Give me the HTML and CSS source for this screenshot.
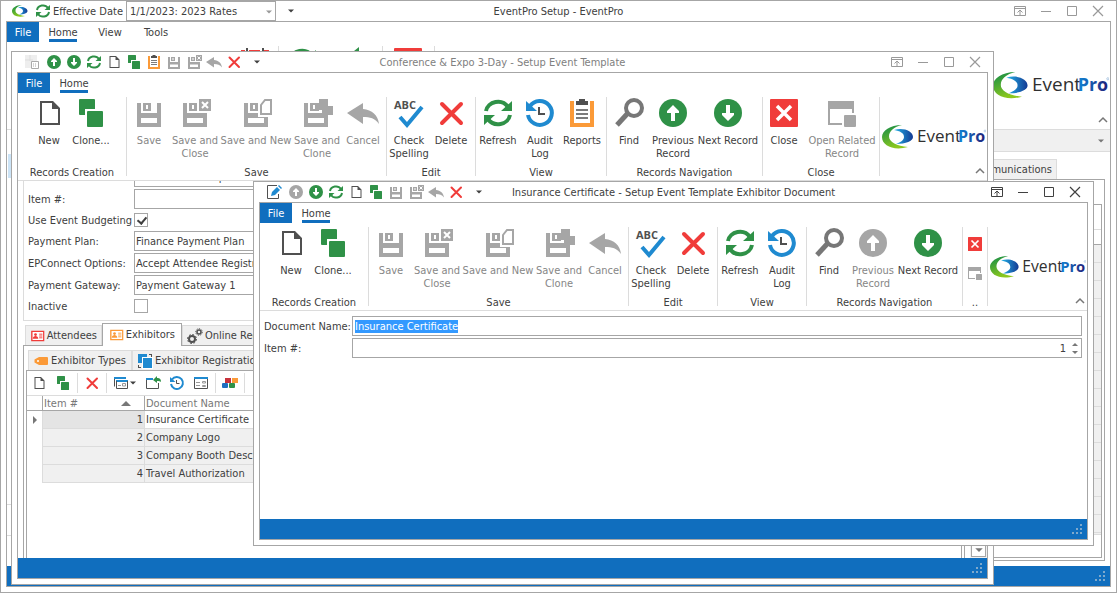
FILE: index.html
```html
<!DOCTYPE html>
<html lang="en">
<head>
  <meta charset="UTF-8" />
  <meta name="viewport" content="width=device-width, initial-scale=1.0" />
  <title>EventPro Setup</title>
  <link rel="stylesheet" href="styles.css">
</head>
<body>
  <!-- icon sprite -->
  <svg class="sprite" xmlns="http://www.w3.org/2000/svg">
    <defs>
      <linearGradient id="gGreen" x1="0" y1="0" x2="0.4" y2="1">
        <stop offset="0" stop-color="#0f8a4a" />
        <stop offset="1" stop-color="#8cc81e" />
      </linearGradient>
      <linearGradient id="gBlue" x1="0" y1="0" x2="1" y2="0">
        <stop offset="0" stop-color="#23b4e8" />
        <stop offset="1" stop-color="#143a94" />
      </linearGradient>
      <linearGradient id="gPro" x1="0" y1="0" x2="1" y2="0">
        <stop offset="0" stop-color="#1186d6" />
        <stop offset="1" stop-color="#1f1f78" />
      </linearGradient>
    </defs>
    <symbol id="i-new" viewBox="0 0 32 32">
      <path d="M7 4h13l7 7v17H7z M9 6v20h16V12h-6V6z" fill="#505050" fill-rule="evenodd" />
    </symbol>
    <symbol id="i-clone" viewBox="0 0 32 32">
      <rect x="4" y="2" width="16" height="16" rx="1" fill="#2f9147" />
      <rect x="10" y="12" width="20" height="20" fill="#fff" />
      <rect x="12" y="14" width="16" height="16" rx="1" fill="#2f9147" />
    </symbol>
    <symbol id="i-save" viewBox="0 0 32 32">
      <path d="M4 6h4v10h16V6h4v24H4z M8 21v5h16v-5z M10 6h8v8h-8z M13 8v4h2V8z" fill="#a6a6a6" fill-rule="evenodd" />
    </symbol>
    <symbol id="i-saveclose" viewBox="0 0 32 32">
      <path d="M4 6h4v10h20v14H4z M8 21v5h16v-5z M10 6h8v8h-8z M13 8v4h2V8z" fill="#a6a6a6" fill-rule="evenodd" />
      <path d="M18 0h14v16H18z" fill="#fff" />
      <path d="M20 2h12v12H20z" fill="#a6a6a6" />
      <path d="M23 5l6 6M29 5l-6 6" stroke="#fff" stroke-width="2" />
    </symbol>
    <symbol id="i-savenew" viewBox="0 0 32 32">
      <path d="M4 6h4v10h10v4h10v10H4z M8 21v5h16v-5z M10 6h8v8h-8z M13 8v4h2V8z" fill="#a6a6a6" fill-rule="evenodd" />
      <path d="M18 7l6-6h8v19H18z" fill="#fff" />
      <path d="M25 3h6v14H21V8z" fill="#fff" stroke="#a6a6a6" stroke-width="2" />
    </symbol>
    <symbol id="i-saveclone" viewBox="0 0 32 32">
      <path d="M3 6h4v10h20v14H3z M7 21v5h16v-5z M9 6h9v8H9z M12 8v4h2V8z" fill="#a6a6a6" fill-rule="evenodd" />
      <path d="M18 2h9v7h5v9H21v-5h-6v-2h3z" fill="#a6a6a6" />
    </symbol>
    <symbol id="i-cancel" viewBox="0 0 32 32">
      <path d="M0 16L16 6v6c9 1 15 6 16 15-4-6-9-7-16-7v7z" fill="#a6a6a6" />
    </symbol>
    <symbol id="i-spell" viewBox="0 0 32 32">
      <text x="1" y="12" class="abc">ABC</text>
      <path d="M7 20l7 8L29 10" fill="none" stroke="#1f8ad0" stroke-width="4" />
    </symbol>
    <symbol id="i-delete" viewBox="0 0 32 32">
      <path d="M7 7l19 19M26 7L7 26" stroke="#f03c3a" stroke-width="4" stroke-linecap="round" />
    </symbol>
    <symbol id="i-refresh" viewBox="0 0 32 32">
      <path d="M4 14a12 11 0 0 1 22-4M28 18a12 11 0 0 1-22 4" fill="none" stroke="#2f9147" stroke-width="4" />
      <path d="M30 4v10H19z M2 28V18h11z" fill="#2f9147" />
    </symbol>
    <symbol id="i-audit" viewBox="0 0 32 32">
      <path d="M6 9a12 12 0 1 1-2 9" fill="none" stroke="#1f8ad0" stroke-width="4" />
      <path d="M2 4v10h11z" fill="#1f8ad0" />
      <path d="M15 10v7h6" fill="none" stroke="#505050" stroke-width="2" />
    </symbol>
    <symbol id="i-reports" viewBox="0 0 32 32">
      <path d="M4 4h24v26H4z M8 8v18h16V8z" fill="#fb9a38" fill-rule="evenodd" />
      <path d="M8 3h16v5H8z" fill="#fff" />
      <path d="M10 4h3V2h6v2h3v4H10z" fill="#505050" />
      <path d="M10 13h12M10 17h12M10 21h12" stroke="#505050" stroke-width="1.5" />
    </symbol>
    <symbol id="i-find" viewBox="0 0 32 32">
      <circle cx="21" cy="11" r="8" fill="none" stroke="#777" stroke-width="4" />
      <path d="M15 16L4 28" stroke="#777" stroke-width="5" />
    </symbol>
    <symbol id="i-up" viewBox="0 0 32 32">
      <circle cx="16" cy="16" r="14" fill="currentColor" />
      <path d="M14 24v-8h-4v-2l6-6 6 6v2h-4v8z" fill="#fff" />
    </symbol>
    <symbol id="i-down" viewBox="0 0 32 32">
      <circle cx="16" cy="16" r="14" fill="currentColor" />
      <path d="M14 8v8h-4v2l6 6 6-6v-2h-4V8z" fill="#fff" />
    </symbol>
    <symbol id="i-back" viewBox="0 0 32 32">
      <path d="M4 13L19 1v7c6 1 11 7 12 15-4-5-7-6-12-6v7z" fill="#2f9147" />
    </symbol>
    <symbol id="i-close" viewBox="0 0 32 32">
      <rect x="2" y="2" width="28" height="28" rx="1" fill="#f03c3a" />
      <path d="M9 9l14 14M23 9L9 23" stroke="#fff" stroke-width="3.5" />
    </symbol>
    <symbol id="i-related" viewBox="0 0 32 32">
      <path d="M2 4h26v12h-2v-4H4v14h12v2H2z" fill="#a6a6a6" />
      <rect x="18" y="18" width="12" height="12" rx="1" fill="#a6a6a6" />
    </symbol>
    <symbol id="i-form" viewBox="0 0 16 16">
      <path d="M1 1h12v6h-5v7H1z" fill="#eee" />
      <path d="M6 1v6M1 6h8" stroke="#ddd" />
      <path d="M7.5 7.5h7v7h-7z" fill="#fff" stroke="#aaa" />
      <path d="M9 10h4M9 12h4" stroke="#aaa" stroke-dasharray="1 1" />
    </symbol>
    <symbol id="i-edit" viewBox="0 0 16 16">
      <path d="M12.500 10v4.500h-11v-13H11" fill="none" stroke="#505050" />
      <path d="M5 12l1-4 5-5 3 3-5 5z" fill="#1f8ad0" />
      <path d="M12 2l1-1 3 3-1 1z" fill="#1f8ad0" />
    </symbol>
    <symbol id="i-caret" viewBox="0 0 8 8">
      <path d="M1 2.500h6l-3 3z" fill="currentColor" />
    </symbol>
    <symbol id="i-chevron" viewBox="0 0 10 8">
      <path d="M1 6l4-4 4 4" fill="none" stroke="#777" stroke-width="1.500" />
    </symbol>
    <symbol id="i-pin" viewBox="0 0 12 12">
      <path d="M.5 1.500h11v9H.5z M.5 3.500h11 M6 10V5 M3.500 7.500L6 5l2.500 2.500" fill="none" stroke="currentColor" />
    </symbol>
    <symbol id="i-min" viewBox="0 0 12 12">
      <path d="M1 6.500h10" stroke="currentColor" />
    </symbol>
    <symbol id="i-max" viewBox="0 0 12 12">
      <path d="M1.500 1.500h9v9h-9z" fill="none" stroke="currentColor" />
    </symbol>
    <symbol id="i-x" viewBox="0 0 12 12">
      <path d="M1 1l10 10M11 1L1 11" stroke="currentColor" stroke-width="1.200" />
    </symbol>
    <symbol id="i-grip" viewBox="0 0 12 12">
      <path d="M8 0h2v2H8zM4 4h2v2H4zM8 4h2v2H8zM0 8h2v2H0zM4 8h2v2H4zM8 8h2v2H8z" fill="#7fa9cc" />
    </symbol>
    <symbol id="i-card" viewBox="0 0 16 16">
      <path d="M2 3h13v10H2z" fill="#fff" stroke="currentColor" stroke-width="1.500" />
      <circle cx="6" cy="6.500" r="1.500" fill="currentColor" />
      <path d="M3 11c0-4 6-4 6 0z" fill="currentColor" />
      <path d="M10 6h3.500M10 8h3.500M10 10h3.500" stroke="currentColor" />
    </symbol>
    <symbol id="i-gears" viewBox="0 0 16 16">
      <circle cx="5" cy="11" r="3" fill="none" stroke="#505050" stroke-width="2" />
      <circle cx="5" cy="11" r="4.500" fill="none" stroke="#505050" stroke-dasharray="1.800 1.700" />
      <circle cx="12" cy="4" r="2" fill="none" stroke="#505050" stroke-width="1.500" />
      <circle cx="12" cy="4" r="3.300" fill="none" stroke="#505050" stroke-dasharray="1.300 1.200" />
    </symbol>
    <symbol id="i-tag" viewBox="0 0 16 16">
      <path d="M6 4h8q1 0 1 1v6q0 1-1 1H6L1.500 9.500v-3z" fill="#fb9a38" />
      <circle cx="5" cy="8" r="1" fill="#fff" />
    </symbol>
    <symbol id="i-reg" viewBox="0 0 16 16">
      <rect x="1" y="1" width="9" height="9" fill="#1f8ad0" />
      <path d="M5 4h11v12H5z" fill="#fff" />
      <rect x="6" y="5" width="9" height="10" fill="#1f8ad0" />
      <path d="M12 1.500h3M14.500 1v3M1 14.500h3M1.500 12v3" stroke="#505050" fill="none" />
    </symbol>
    <symbol id="i-views" viewBox="0 0 16 16">
      <path d="M1.500 11.500v-9h11" fill="none" stroke="#505050" />
      <path d="M1 2h12v2H1z M3 5h12v2H3z" fill="#1f8ad0" />
      <path d="M3.500 6v7.500h11V6" fill="none" stroke="#505050" />
      <path d="M5 10.500h3M9.500 8.500h3v2.500h-3z" fill="none" stroke="#999" />
    </symbol>
    <symbol id="i-export" viewBox="0 0 16 16">
      <path d="M8 3.500H1.500v10h12V8" fill="none" stroke="#505050" />
      <path d="M1 3h7v2H1z" fill="#1f8ad0" />
      <path d="M8 5l4-4v2c3 0 4 1 4 4-1-1-2-1-4-1v2z" fill="#2f9147" />
    </symbol>
    <symbol id="i-layout" viewBox="0 0 16 16">
      <path d="M1.500 2.500h13v11h-13z" fill="#fff" stroke="#505050" />
      <path d="M1 2h14v2H1z" fill="#1f8ad0" />
      <path d="M3 7.500h4M3 10.500h4M9.500 6.500h3v1.500h-3zM9.500 10.500h3v1h-3z" fill="none" stroke="#999" />
    </symbol>
    <symbol id="i-blocks" viewBox="0 0 16 16">
      <rect x="3" y="3" width="6" height="5" fill="#c8323c" />
      <rect x="10" y="3" width="6" height="5" fill="#fb9a38" />
      <rect x="0" y="8" width="6" height="5" rx="1" fill="#1f6fc0" />
      <rect x="7" y="8" width="6" height="5" rx="1" fill="#2f9147" />
    </symbol>
    <symbol id="i-calendar" viewBox="0 0 32 32">
      <path d="M2 4h4v4h4V4h11v4h4V4h5v26H2z" fill="#f03c3a" />
      <path d="M7 2h2v5H7zM23 2h2v5h-2z" fill="#505050" />
    </symbol>
    <symbol id="i-mark" viewBox="0 0 32 24">
      <path d="M20 0C8 0 0 6 0 12c0 9 12 14 26 10C15 21 7 17 7 11.500 7 6 12 2 20 0z" fill="url(#gGreen)" />
      <path d="M12 5c9-3 19 1 19 7 0 4-7 7-17 7 5-2 8-4 8-7 0-4-4-6-10-7z" fill="url(#gBlue)" />
    </symbol>
    <symbol id="logo" viewBox="0 0 104 26">
      <use href="#i-mark" x="0" y="1" width="32" height="24" />
      <text x="35" y="18" class="logo-event">Event</text>
      <text x="76" y="18" class="logo-pro">Pro</text>
      <circle cx="103" cy="7" r="1" fill="none" stroke="#7aa5d0" stroke-width="0.500" />
    </symbol>
  </svg>

  <!-- main window -->
  <div class="window main-window">
    <div class="titlebar">
      <div class="quick">
        <button class="qbtn" aria-label="EventPro"><svg><use href="#i-mark" /></svg></button>
        <button class="qbtn spaced" aria-label="Refresh"><svg><use href="#i-refresh" /></svg></button>
        <label for="effective">Effective Date</label>
        <div class="combo">
          <select id="effective">
            <option>1/1/2023: 2023 Rates</option>
          </select>
          <svg class="caret"><use href="#i-caret" /></svg>
        </div>
        <button class="qbtn more" aria-label="Customize"><svg class="caret"><use href="#i-caret" /></svg></button>
      </div>
      <div class="title">EventPro Setup - EventPro</div>
      <div class="controls">
        <button aria-label="Ribbon options"><svg><use href="#i-pin" /></svg></button>
        <button aria-label="Minimize"><svg><use href="#i-min" /></svg></button>
        <button aria-label="Maximize"><svg><use href="#i-max" /></svg></button>
        <button aria-label="Close"><svg><use href="#i-x" /></svg></button>
      </div>
    </div>
    <div class="frame">
      <div class="ribbon">
        <div class="tabs">
          <button class="file">File</button>
          <button class="tab active"><span>Home</span></button>
          <button class="tab"><span>View</span></button>
          <button class="tab"><span>Tools</span></button>
        </div>
        <div class="groups">
          <div class="group setup">
            <button class="rbtn" aria-label="Calendar"><svg><use href="#i-calendar" /></svg></button>
          </div>
          <div class="group actions">
            <button class="rbtn" aria-label="Refresh"><svg><use href="#i-refresh" /></svg></button>
            <button class="rbtn" aria-label="Undo"><svg><use href="#i-back" /></svg></button>
          </div>
          <div class="group quit">
            <button class="rbtn" aria-label="Close"><svg><use href="#i-close" /></svg></button>
          </div>
          <svg class="logo logo-large"><use href="#logo" /></svg>
        </div>
        <button class="collapse" aria-label="Collapse ribbon"><svg><use href="#i-chevron" /></svg></button>
      </div>
      <div class="workspace">
        <div class="sidebar">
          <div class="side-active"></div>
          <div class="side-item"></div>
          <div class="side-item"></div>
        </div>
        <div class="content">
          <div class="strip"><svg class="caret"><use href="#i-caret" /></svg></div>
          <div class="back-tabs"><button>Communications</button></div>
          <div class="back-panel">
            <div class="back-list">
              <div class="back-filter"></div>
              <div class="back-head"></div>
              <div class="back-rows"></div>
            </div>
          </div>
        </div>
      </div>
      <div class="statusbar"><svg><use href="#i-grip" /></svg></div>
    </div>
  </div>

  <!-- event template window -->
  <div class="window template-window">
    <div class="titlebar">
      <div class="quick">
        <button class="qbtn first" aria-label="Form"><svg><use href="#i-form" /></svg></button>
        <button class="qbtn green" aria-label="Previous"><svg><use href="#i-up" /></svg></button>
        <button class="qbtn green" aria-label="Next"><svg><use href="#i-down" /></svg></button>
        <button class="qbtn" aria-label="Refresh"><svg><use href="#i-refresh" /></svg></button>
        <button class="qbtn" aria-label="New"><svg><use href="#i-new" /></svg></button>
        <button class="qbtn" aria-label="Clone"><svg><use href="#i-clone" /></svg></button>
        <button class="qbtn" aria-label="Reports"><svg><use href="#i-reports" /></svg></button>
        <button class="qbtn" aria-label="Save"><svg><use href="#i-save" /></svg></button>
        <button class="qbtn" aria-label="Save and Close"><svg><use href="#i-saveclose" /></svg></button>
        <button class="qbtn" aria-label="Cancel"><svg><use href="#i-cancel" /></svg></button>
        <button class="qbtn" aria-label="Delete"><svg><use href="#i-delete" /></svg></button>
        <button class="qbtn spaced" aria-label="Customize"><svg class="caret"><use href="#i-caret" /></svg></button>
      </div>
      <div class="title muted">Conference &amp; Expo 3-Day - Setup Event Template</div>
      <div class="controls">
        <button aria-label="Ribbon options"><svg><use href="#i-pin" /></svg></button>
        <button aria-label="Minimize"><svg><use href="#i-min" /></svg></button>
        <button aria-label="Maximize"><svg><use href="#i-max" /></svg></button>
        <button aria-label="Close"><svg><use href="#i-x" /></svg></button>
      </div>
    </div>
    <div class="frame">
      <div class="ribbon">
        <div class="tabs">
          <button class="file">File</button>
          <button class="tab active"><span>Home</span></button>
        </div>
        <div class="groups">
          <div class="group creation">
            <button class="rbtn"><svg><use href="#i-new" /></svg>New</button>
            <button class="rbtn"><svg><use href="#i-clone" /></svg>Clone...</button>
            <div class="group-name">Records Creation</div>
          </div>
          <div class="group saving">
            <button class="rbtn save" disabled><svg><use href="#i-save" /></svg>Save</button>
            <button class="rbtn mid" disabled><svg><use href="#i-saveclose" /></svg>Save and<br>Close</button>
            <button class="rbtn wide" disabled><svg><use href="#i-savenew" /></svg>Save and New</button>
            <button class="rbtn mid" disabled><svg><use href="#i-saveclone" /></svg>Save and<br>Clone</button>
            <button class="rbtn save" disabled><svg><use href="#i-cancel" /></svg>Cancel</button>
            <div class="group-name">Save</div>
          </div>
          <div class="group editing">
            <button class="rbtn"><svg><use href="#i-spell" /></svg>Check<br>Spelling</button>
            <button class="rbtn"><svg><use href="#i-delete" /></svg>Delete</button>
            <div class="group-name">Edit</div>
          </div>
          <div class="group viewing-wide">
            <button class="rbtn"><svg><use href="#i-refresh" /></svg>Refresh</button>
            <button class="rbtn"><svg><use href="#i-audit" /></svg>Audit<br>Log</button>
            <button class="rbtn"><svg><use href="#i-reports" /></svg>Reports</button>
            <div class="group-name">View</div>
          </div>
          <div class="group navigation">
            <button class="rbtn"><svg><use href="#i-find" /></svg>Find</button>
            <button class="rbtn prev"><svg class="green"><use href="#i-up" /></svg>Previous<br>Record</button>
            <button class="rbtn next"><svg class="green"><use href="#i-down" /></svg>Next Record</button>
            <div class="group-name">Records Navigation</div>
          </div>
          <div class="group closing">
            <button class="rbtn"><svg><use href="#i-close" /></svg>Close</button>
            <button class="rbtn wide" disabled><svg><use href="#i-related" /></svg>Open Related<br>Record</button>
            <div class="group-name">Close</div>
          </div>
          <svg class="logo"><use href="#logo" /></svg>
        </div>
        <button class="collapse" aria-label="Collapse ribbon"><svg><use href="#i-chevron" /></svg></button>
      </div>
      <div class="workspace">
        <div class="record">
          <div class="template-form">
            <div class="row">
              <label for="tname">Name:</label>
              <input type="text" id="tname" value="Conference &amp; Expo 3-Day" />
            </div>
            <div class="row">
              <label for="titem">Item #:</label>
              <input type="text" id="titem" />
            </div>
            <div class="row check">
              <label for="budget">Use Event Budgeting</label>
              <input type="checkbox" id="budget" checked />
            </div>
            <div class="row">
              <label for="plan">Payment Plan:</label>
              <input type="text" id="plan" value="Finance Payment Plan" />
            </div>
            <div class="row">
              <label for="epc">EPConnect Options:</label>
              <input type="text" id="epc" value="Accept Attendee Registrations" />
            </div>
            <div class="row">
              <label for="gateway">Payment Gateway:</label>
              <input type="text" id="gateway" value="Payment Gateway 1" />
            </div>
            <div class="row check">
              <label for="inactive">Inactive</label>
              <input type="checkbox" id="inactive" />
            </div>
          </div>
          <div class="page-tabs">
            <button class="attendees"><svg class="red"><use href="#i-card" /></svg>Attendees</button>
            <button class="current"><svg class="orange"><use href="#i-card" /></svg>Exhibitors</button>
            <button><svg><use href="#i-gears" /></svg>Online Registration</button>
          </div>
          <div class="page">
            <div class="sub-tabs">
              <button><svg><use href="#i-tag" /></svg>Exhibitor Types</button>
              <button><svg><use href="#i-reg" /></svg>Exhibitor Registration</button>
            </div>
            <div class="grid-panel">
              <div class="toolbar">
                <button aria-label="New"><svg><use href="#i-new" /></svg></button>
                <button aria-label="Clone"><svg><use href="#i-clone" /></svg></button>
                <i></i>
                <button aria-label="Delete"><svg><use href="#i-delete" /></svg></button>
                <i></i>
                <button class="drop" aria-label="Views"><svg><use href="#i-views" /></svg><svg class="caret"><use href="#i-caret" /></svg></button>
                <button aria-label="Export"><svg><use href="#i-export" /></svg></button>
                <button aria-label="Audit log"><svg><use href="#i-audit" /></svg></button>
                <button aria-label="Layout"><svg><use href="#i-layout" /></svg></button>
                <i></i>
                <button aria-label="Categories"><svg><use href="#i-blocks" /></svg></button>
                <i></i>
              </div>
              <table>
                <thead>
                  <tr><th class="mark"></th><th class="num">Item #<span class="sort"></span></th><th>Document Name</th></tr>
                </thead>
                <tbody>
                  <tr class="selected"><td class="mark"><span class="pointer"></span></td><td class="num">1</td><td>Insurance Certificate</td></tr>
                  <tr><td class="mark"></td><td class="num">2</td><td>Company Logo</td></tr>
                  <tr><td class="mark"></td><td class="num">3</td><td>Company Booth Description</td></tr>
                  <tr><td class="mark"></td><td class="num">4</td><td>Travel Authorization</td></tr>
                </tbody>
              </table>
            </div>
          </div>
        </div>
        <div class="scroller"><button aria-label="Scroll down"><svg class="caret"><use href="#i-caret" /></svg></button></div>
      </div>
      <div class="statusbar"><svg><use href="#i-grip" /></svg></div>
    </div>
  </div>

  <!-- exhibitor document window -->
  <div class="window document-window">
    <div class="titlebar">
      <div class="quick">
        <button class="qbtn first" aria-label="Edit"><svg><use href="#i-edit" /></svg></button>
        <button class="qbtn gray" aria-label="Previous"><svg><use href="#i-up" /></svg></button>
        <button class="qbtn green" aria-label="Next"><svg><use href="#i-down" /></svg></button>
        <button class="qbtn" aria-label="Refresh"><svg><use href="#i-refresh" /></svg></button>
        <button class="qbtn" aria-label="New"><svg><use href="#i-new" /></svg></button>
        <button class="qbtn" aria-label="Clone"><svg><use href="#i-clone" /></svg></button>
        <button class="qbtn" aria-label="Save"><svg><use href="#i-save" /></svg></button>
        <button class="qbtn" aria-label="Save and Close"><svg><use href="#i-saveclose" /></svg></button>
        <button class="qbtn" aria-label="Cancel"><svg><use href="#i-cancel" /></svg></button>
        <button class="qbtn" aria-label="Delete"><svg><use href="#i-delete" /></svg></button>
        <button class="qbtn spaced" aria-label="Customize"><svg class="caret"><use href="#i-caret" /></svg></button>
      </div>
      <div class="title">Insurance Certificate - Setup Event Template Exhibitor Document</div>
      <div class="controls">
        <button aria-label="Ribbon options"><svg><use href="#i-pin" /></svg></button>
        <button aria-label="Minimize"><svg><use href="#i-min" /></svg></button>
        <button aria-label="Maximize"><svg><use href="#i-max" /></svg></button>
        <button aria-label="Close"><svg><use href="#i-x" /></svg></button>
      </div>
    </div>
    <div class="frame">
      <div class="ribbon">
        <div class="tabs">
          <button class="file">File</button>
          <button class="tab active"><span>Home</span></button>
        </div>
        <div class="groups">
          <div class="group creation">
            <button class="rbtn"><svg><use href="#i-new" /></svg>New</button>
            <button class="rbtn"><svg><use href="#i-clone" /></svg>Clone...</button>
            <div class="group-name">Records Creation</div>
          </div>
          <div class="group saving">
            <button class="rbtn save" disabled><svg><use href="#i-save" /></svg>Save</button>
            <button class="rbtn mid" disabled><svg><use href="#i-saveclose" /></svg>Save and<br>Close</button>
            <button class="rbtn wide" disabled><svg><use href="#i-savenew" /></svg>Save and New</button>
            <button class="rbtn mid" disabled><svg><use href="#i-saveclone" /></svg>Save and<br>Clone</button>
            <button class="rbtn save" disabled><svg><use href="#i-cancel" /></svg>Cancel</button>
            <div class="group-name">Save</div>
          </div>
          <div class="group editing">
            <button class="rbtn"><svg><use href="#i-spell" /></svg>Check<br>Spelling</button>
            <button class="rbtn"><svg><use href="#i-delete" /></svg>Delete</button>
            <div class="group-name">Edit</div>
          </div>
          <div class="group editing">
            <button class="rbtn"><svg><use href="#i-refresh" /></svg>Refresh</button>
            <button class="rbtn"><svg><use href="#i-audit" /></svg>Audit<br>Log</button>
            <div class="group-name">View</div>
          </div>
          <div class="group navigation">
            <button class="rbtn"><svg><use href="#i-find" /></svg>Find</button>
            <button class="rbtn prev" disabled><svg class="gray"><use href="#i-up" /></svg>Previous<br>Record</button>
            <button class="rbtn next"><svg class="green"><use href="#i-down" /></svg>Next Record</button>
            <div class="group-name">Records Navigation</div>
          </div>
          <div class="group compact">
            <button aria-label="Close"><svg><use href="#i-close" /></svg></button>
            <button aria-label="Open Related Record" disabled><svg><use href="#i-related" /></svg></button>
            <div class="group-name">..</div>
          </div>
          <svg class="logo logo-small"><use href="#logo" /></svg>
        </div>
        <button class="collapse" aria-label="Collapse ribbon"><svg><use href="#i-chevron" /></svg></button>
      </div>
      <div class="workspace">
        <form class="document-form">
          <label for="docname">Document Name:</label>
          <input type="text" id="docname" value="Insurance Certificate" />
          <label for="docitem">Item #:</label>
          <div class="spin">
            <input type="number" id="docitem" value="1" />
            <div class="spin-arrows"><span class="up"></span><span class="down"></span></div>
          </div>
        </form>
      </div>
      <div class="statusbar"><svg><use href="#i-grip" /></svg></div>
    </div>
  </div>

  <script>
    const docName = document.getElementById("docname");
    docName.focus();
    docName.select();
  </script>
</body>
</html>
```
FILE: styles.css
```css
* {
  box-sizing: border-box;
}

body {
  margin: 0;
  height: 100vh;
  position: relative;
  overflow: hidden;
  background-color: white;
  color: #404040;
  font: 11px/13px "DejaVu Sans Condensed", Tahoma, sans-serif;
}

button, input, select {
  font: inherit;
  color: inherit;
  border: none;
  background: none;
  padding: 0;
  margin: 0;
  outline: none;
}

button:disabled {
  color: #868686;
}

.sprite {
  position: absolute;
  width: 0;
  height: 0;
}

.abc {
  font: bold 11px "Open Sans", sans-serif;
  fill: #505050;
}

.logo-event {
  font: 17px "Open Sans", sans-serif;
  fill: #303030;
}

.logo-pro {
  font: bold 16px "Open Sans", sans-serif;
  fill: url(#gPro);
}

.green { color: #2f9147; }
.gray { color: #a6a6a6; }
.red { color: #f03c3a; }
.orange { color: #fb9a38; }

/* windows */
.window {
  position: absolute;
  display: flex;
  flex-direction: column;
  background-color: white;
  border: 1px solid #a6a6a6;
  padding: 0 5px 5px;
}

.main-window {
  inset: 0;
}

.template-window {
  inset: 51px 123px 8px 11px;
}

.document-window {
  inset: 181px 23px 47px 253px;
}

.titlebar {
  height: 20px;
  display: grid;
  grid-template-columns: 1fr auto 1fr;
  align-items: center;
}

.title {
  white-space: nowrap;
}

.title.muted {
  color: #808080;
}

.quick {
  display: flex;
  align-items: center;
  padding-left: 5px;
}

.main-window .quick {
  padding-left: 4px;
}

.qbtn {
  width: 20px;
  height: 20px;
  display: flex;
  align-items: center;
  justify-content: center;
}

.qbtn svg {
  width: 16px;
  height: 16px;
}

.first {
  margin-right: 2px;
}

.spaced {
  margin-left: 3px;
}

.more {
  margin-left: 5px;
}

svg.caret {
  width: 8px;
  height: 8px;
}

.combo {
  width: 150px;
  height: 20px;
  margin-left: 3px;
  position: relative;
}

.combo select {
  width: 100%;
  height: 100%;
  appearance: none;
  border: 1px solid #a6a6a6;
  padding-left: 3px;
}

.combo .caret {
  position: absolute;
  right: 3px;
  top: 7px;
  color: #999;
}

.controls {
  display: flex;
  justify-content: flex-end;
  color: #999;
}

.document-window .controls {
  color: #404040;
}

.controls button {
  width: 26px;
  height: 20px;
  display: flex;
  align-items: center;
  justify-content: center;
}

.controls svg {
  width: 12px;
  height: 12px;
}

.frame {
  flex: 1;
  min-height: 0;
  display: flex;
  flex-direction: column;
  border: 1px solid #a6a6a6;
}

.statusbar {
  height: 20px;
  flex-shrink: 0;
  background-color: #106ebe;
  display: flex;
  justify-content: flex-end;
  align-items: center;
  padding: 2px 3px 0 0;
}

.statusbar svg {
  width: 12px;
  height: 12px;
}

/* ribbon */
.ribbon {
  position: relative;
  height: 108px;
  flex-shrink: 0;
  border-bottom: 1px solid #dcdcdc;
}

.tabs {
  display: flex;
  height: 24px;
}

.file {
  width: 32px;
  height: 20px;
  background-color: #106ebe;
  color: white;
}

.tab {
  width: 46px;
  height: 20px;
}

.tab span {
  display: flex;
  justify-content: center;
  width: 28px;
  height: 20px;
  margin: 0 auto;
  padding-top: 4px;
  border-bottom: 3px solid transparent;
}

.tab.active {
  width: 48px;
}

.tab.active span {
  border-bottom-color: #106ebe;
}

.groups {
  display: flex;
  height: 79px;
}

.group {
  position: relative;
  display: flex;
  flex-shrink: 0;
  border-right: 1px solid #dcdcdc;
}

.creation { width: 109px; padding-left: 10px; }
.saving { width: 260px; }
.editing { width: 89px; padding-left: 1px; }
.viewing-wide { width: 131px; padding-left: 1px; }
.navigation { width: 156px; padding-left: 1px; }
.closing { width: 117px; }
.setup { width: 272px; padding-right: 2px; justify-content: flex-end; }
.actions { width: 104px; justify-content: space-between; padding: 0 5px 0 2px; }
.quit { width: 52px; padding-left: 4px; }

.compact {
  width: 25px;
  flex-direction: column;
  align-items: center;
  gap: 14px;
  padding-top: 9px;
}

.compact button {
  height: 15px;
}

.compact svg {
  width: 16px;
  height: 16px;
}

.group-name {
  position: absolute;
  left: 0;
  right: 0;
  bottom: -4px;
  text-align: center;
  line-height: 14px;
}

.rbtn {
  width: 42px;
  height: 64px;
  display: flex;
  flex-direction: column;
  align-items: center;
  flex-shrink: 0;
  text-align: center;
  white-space: nowrap;
}

.rbtn svg {
  flex-shrink: 0;
  width: 32px;
  height: 32px;
  margin-bottom: 5px;
}

.rbtn.save { width: 44px; }
.rbtn.mid { width: 48px; }
.rbtn.wide { width: 74px; }
.rbtn.prev { width: 46px; }
.rbtn.next { width: 64px; }

.logo {
  width: 104px;
  height: 26px;
  align-self: center;
  margin-left: 2px;
  flex-shrink: 0;
}

.logo-small {
  width: 96px;
  height: 24px;
}

.logo-large {
  width: 116px;
  height: 29px;
  margin-left: auto;
  margin-right: 1px;
}

.collapse {
  position: absolute;
  right: 2px;
  bottom: 5px;
  width: 10px;
  height: 8px;
}

.collapse svg {
  display: block;
  width: 10px;
  height: 8px;
}

.workspace {
  flex: 1;
  min-height: 0;
  display: flex;
  overflow: hidden;
}

/* main window content */
.sidebar {
  width: 228px;
  display: flex;
  flex-direction: column;
  padding-top: 24px;
}

.side-active {
  height: 24px;
  margin: 0 1px auto;
  background-color: #cce4f7;
}

.side-item {
  height: 31px;
  border-top: 1px solid #dcdcdc;
}

.content {
  flex: 1;
  display: flex;
  flex-direction: column;
  padding-bottom: 5px;
}

.strip {
  height: 22px;
  background-color: #f0f0f0;
  border-bottom: 1px solid #dcdcdc;
  display: flex;
  justify-content: flex-end;
  align-items: center;
  padding-right: 5px;
  color: #777;
}

.back-tabs {
  display: flex;
  justify-content: flex-end;
  padding: 7px 53px 0 0;
}

.back-tabs button {
  height: 20px;
  padding: 0 4px;
  background-color: #f0f0f0;
  border: 1px solid #dcdcdc;
  border-bottom: none;
}

.back-panel {
  flex: 1;
  margin-right: 5px;
  border: 1px solid #a6a6a6;
  padding: 24px 2px 2px;
  display: flex;
}

.back-list {
  flex: 1;
  border: 1px solid #a6a6a6;
}

.back-filter {
  height: 25px;
  border-bottom: 1px solid #dcdcdc;
}

.back-head {
  height: 15px;
  border-bottom: 1px solid #a6a6a6;
}

.back-rows {
  height: 290px;
  border-bottom: 1px solid #dcdcdc;
  background: repeating-linear-gradient(#f0f0f0 0 17px, #dcdcdc 17px 18px);
}

/* template window content */
.record {
  flex: 1;
  display: flex;
  flex-direction: column;
  padding-left: 5px;
}

.template-form {
  margin-top: -16px;
  border: 1px solid #dcdcdc;
  padding: 1px 4px 5px;
  flex-shrink: 0;
}

.row {
  display: flex;
  align-items: center;
  height: 20px;
  margin-bottom: 2px;
}

.row.check {
  height: 18px;
}

.row:last-child {
  margin-bottom: 0;
}

.row label {
  width: 106px;
  white-space: nowrap;
}

.row input[type="text"] {
  flex: 1;
  height: 20px;
  border: 1px solid #a6a6a6;
  padding: 0 1px;
}

.row input[type="checkbox"] {
  appearance: none;
  width: 14px;
  height: 14px;
  border: 1px solid #a6a6a6;
}

.row input[type="checkbox"]:checked::after {
  content: "";
  display: block;
  width: 4px;
  height: 7px;
  margin: 1px 4px;
  border: solid #404040;
  border-width: 0 2px 2px 0;
  transform: rotate(40deg);
}

.page-tabs {
  display: flex;
  align-items: flex-end;
  height: 23px;
  margin: 2px 0 -1px 2px;
  position: relative;
  flex-shrink: 0;
}

.page-tabs button, .sub-tabs button {
  display: flex;
  align-items: center;
  gap: 2px;
  height: 20px;
  padding: 0 4px;
  white-space: nowrap;
  background-color: #f0f0f0;
  border: 1px solid #dcdcdc;
  border-bottom: none;
}

.page-tabs svg, .sub-tabs svg {
  width: 16px;
  height: 16px;
}

.page-tabs button {
  margin-bottom: 1px;
}

.page-tabs .attendees {
  width: 77px;
}

.page-tabs .current {
  width: 80px;
  height: 23px;
  margin-bottom: 0;
  padding: 0 6px 1px;
  background-color: white;
  border-color: #a6a6a6;
}

.page {
  flex: 1;
  display: flex;
  flex-direction: column;
  margin-right: 5px;
  padding: 4px 2px 0;
  border: 1px solid #a6a6a6;
  border-bottom: none;
}

.sub-tabs {
  display: flex;
  padding-left: 2px;
}

.sub-tabs button:first-child {
  width: 104px;
}

.grid-panel {
  flex: 1;
  border: 1px solid #a6a6a6;
  border-bottom: none;
}

.toolbar {
  display: flex;
  align-items: center;
  height: 24px;
}

.toolbar button {
  width: 24px;
  height: 20px;
  display: flex;
  align-items: center;
  justify-content: center;
}

.toolbar button.drop {
  width: 32px;
}

.toolbar button svg {
  width: 16px;
  height: 16px;
  flex-shrink: 0;
}

.toolbar button svg.caret {
  width: 8px;
  height: 8px;
}

.toolbar i {
  width: 1px;
  height: 20px;
  margin: 0 2px;
  background-color: #dcdcdc;
}

table {
  width: 100%;
  table-layout: fixed;
  border-collapse: separate;
  border-spacing: 0;
  border-top: 1px solid #dcdcdc;
}

th {
  height: 15px;
  padding: 0 1px;
  text-align: left;
  font-weight: normal;
  color: #777;
  border-right: 1px solid #a6a6a6;
  border-bottom: 1px solid #a6a6a6;
}

td {
  height: 18px;
  padding: 0 1px;
  background-color: #f0f0f0;
  border-right: 1px solid #dcdcdc;
  border-bottom: 1px solid #dcdcdc;
}

.mark {
  width: 16px;
}

td.mark {
  background-color: white;
  border-bottom: none;
}

.num {
  width: 102px;
}

td.num {
  text-align: right;
}

.selected td {
  background-color: white;
}

.selected td.num {
  background-color: #e4e4e4;
}

.sort {
  float: right;
  margin: 4px 12px 0 0;
  border: 5px solid transparent;
  border-top: none;
  border-bottom: 5px solid #777;
}

.pointer {
  display: block;
  margin-left: 5px;
  width: 0;
  border: 4px solid transparent;
  border-right: none;
  border-left-color: #777;
}

.scroller {
  width: 17px;
  padding: 0 1px 1px;
  display: flex;
  align-items: flex-end;
  background-color: #f0f0f0;
}

.scroller button {
  width: 15px;
  height: 15px;
  display: flex;
  align-items: center;
  justify-content: center;
  background-color: white;
  border: 1px solid #a6a6a6;
  color: #777;
}

.scroller .caret {
  width: 10px;
  height: 10px;
}

/* document window content */
.document-form {
  flex: 1;
  display: grid;
  grid-template-columns: 88px 1fr;
  grid-auto-rows: 20px;
  gap: 2px 0;
  align-content: start;
  align-items: center;
  padding: 5px 5px 0 4px;
}

.document-form > input, .spin {
  height: 20px;
  border: 1px solid #a6a6a6;
  padding: 0 2px;
}

.spin {
  display: flex;
  align-items: center;
}

.spin input {
  flex: 1;
  text-align: right;
  appearance: textfield;
}

.spin input::-webkit-inner-spin-button {
  appearance: none;
}

.spin-arrows {
  display: flex;
  flex-direction: column;
  gap: 5px;
  margin: 0 1px 0 6px;
}

.spin-arrows span {
  border: 3px solid transparent;
}

.spin-arrows .up {
  border-top: none;
  border-bottom-color: #777;
}

.spin-arrows .down {
  border-bottom: none;
  border-top-color: #777;
}

::selection {
  background-color: #3399ff;
  color: white;
}
```
